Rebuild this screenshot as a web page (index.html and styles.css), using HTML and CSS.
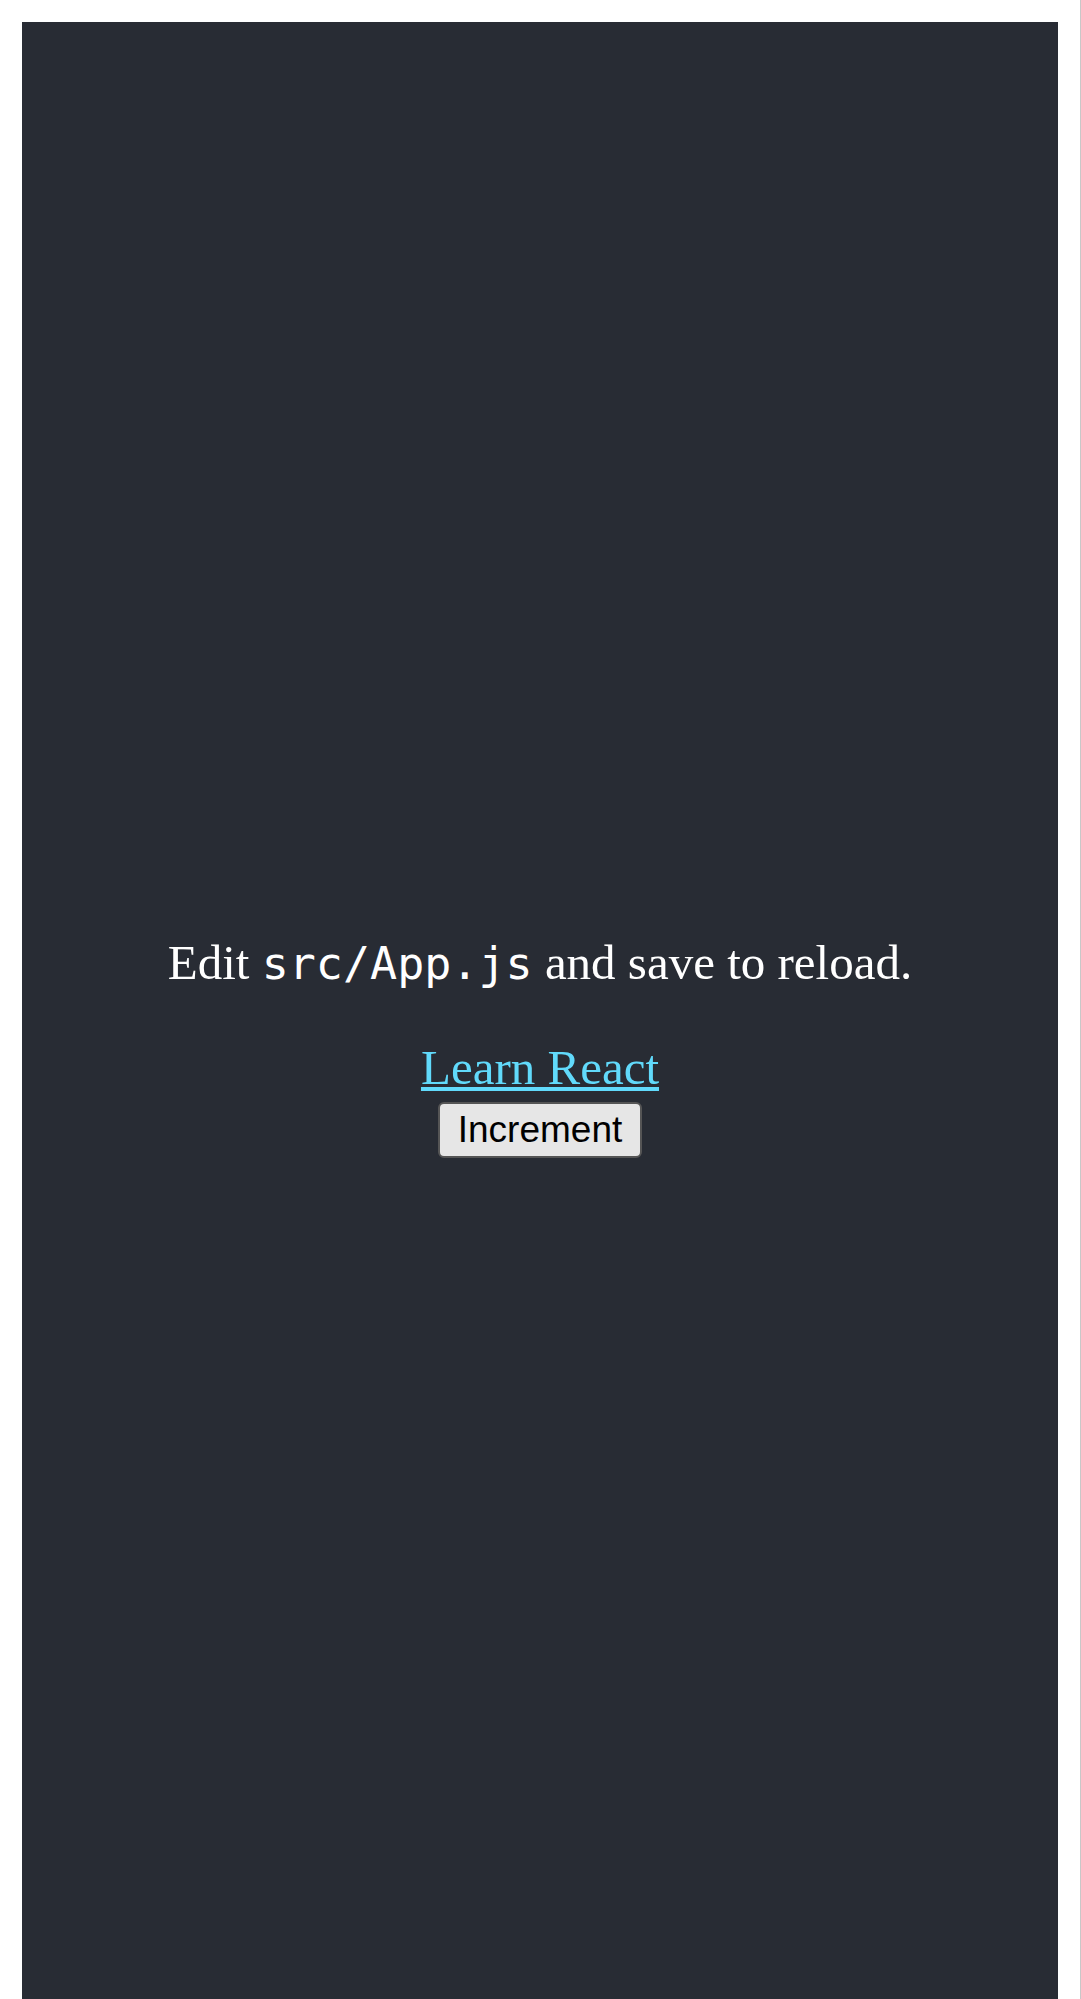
FILE: index.html
```html
<!DOCTYPE html>
<html lang="en">
<head>
<meta charset="utf-8">
<title>React App</title>
<link rel="stylesheet" href="styles.css">
</head>
<body>
<div class="frame">
  <div class="app">
    <header class="app-header">
      <p class="intro">Edit <code class="code">src/App.js</code> and save to reload.</p>
      <a class="app-link" href="#">Learn React</a>
      <button class="btn" type="button">Increment</button>
    </header>
  </div>
</div>
</body>
</html>
```

FILE: styles.css
```css
html, body {
  margin: 0;
  padding: 0;
  background: #ffffff;
}

.frame {
  padding: 22px 22px 0 22px;
  border-right: 1px solid #c8c8c8;
  width: 1036px;
}

.app {
  text-align: center;
}

.app-header {
  background-color: #282c34;
  min-height: 1999px;
  display: flex;
  flex-direction: column;
  align-items: center;
  justify-content: center;
  font-family: "Liberation Serif", "Times New Roman", serif;
  font-size: 49px;
  color: #ffffff;
}

.intro {
  margin: 48px 0;
}

.code {
  font-family: "DejaVu Sans Mono", "Liberation Mono", monospace;
  font-size: 45px;
}

.app-link {
  color: #61dafb;
}

.btn {
  margin-top: 6px;
  font-family: "Liberation Sans", Arial, sans-serif;
  font-size: 37px;
  line-height: 44px;
  color: #000000;
  background: #e6e6e6;
  border: 2px solid #555555;
  border-radius: 6px;
  padding: 4px 18px;
}
```
